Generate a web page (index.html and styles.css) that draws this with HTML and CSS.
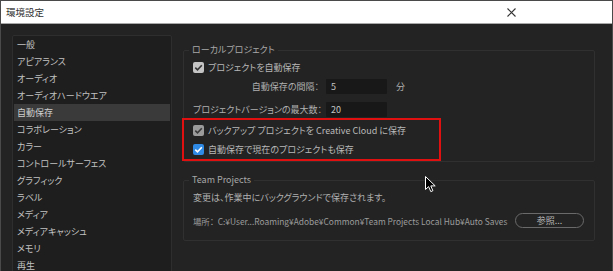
FILE: index.html
```html
<!DOCTYPE html>
<html lang="ja">
<head>
    <meta charset="UTF-8">
    <link rel="stylesheet" href="styles.css">
    <title>環境設定</title>
</head>
<body>
    <div class="window">
        <div class="titlebar">
            <span class="title">環境設定</span>
            <svg class="close" width="9" height="9" viewBox="0 0 9 9">
                <path d="M0.5 0.5 L8.5 8.5 M8.5 0.5 L0.5 8.5" stroke="#333" stroke-width="1.1" fill="none"/>
            </svg>
        </div>

        <div class="content">
            <ul class="side-list">
                <li>一般</li>
                <li>アピアランス</li>
                <li>オーディオ</li>
                <li>オーディオハードウエア</li>
                <li class="selected">自動保存</li>
                <li>コラボレーション</li>
                <li>カラー</li>
                <li>コントロールサーフェス</li>
                <li>グラフィック</li>
                <li>ラベル</li>
                <li>メディア</li>
                <li>メディアキャッシュ</li>
                <li>メモリ</li>
                <li>再生</li>
            </ul>

            <div class="panel">
                <fieldset class="group local">
                    <legend>ローカルプロジェクト</legend>
                    <div class="check-row first">
                        <span class="check light">
                            <svg width="11" height="11" viewBox="0 0 11 11"><path d="M2.3 5.6 L4.5 7.8 L8.8 3.2" stroke="#333" stroke-width="1.6" fill="none"/></svg>
                        </span>
                        プロジェクトを自動保存
                    </div>
                    <div class="field-row">
                        <span class="field-label">自動保存の間隔：</span>
                        <span class="input">5</span>
                        <span class="unit">分</span>
                    </div>
                    <div class="field-row second">
                        <span class="field-label">プロジェクトバージョンの最大数：</span>
                        <span class="input">20</span>
                    </div>
                    <div class="highlight">
                        <div class="check-row">
                            <span class="check gray">
                                <svg width="11" height="11" viewBox="0 0 11 11"><path d="M2.3 5.6 L4.5 7.8 L8.8 3.2" stroke="#3a3a3a" stroke-width="1.6" fill="none"/></svg>
                            </span>
                            バックアップ プロジェクトを Creative Cloud に保存
                        </div>
                        <div class="check-row">
                            <span class="check blue">
                                <svg width="11" height="11" viewBox="0 0 11 11"><path d="M2.3 5.6 L4.5 7.8 L8.8 3.2" stroke="#fff" stroke-width="1.6" fill="none"/></svg>
                            </span>
                            自動保存で現在のプロジェクトも保存
                        </div>
                    </div>
                </fieldset>

                <fieldset class="group team">
                    <legend>Team Projects</legend>
                    <div class="note">変更は、作業中にバックグラウンドで保存されます。</div>
                    <div class="location-row">
                        <span class="location">場所：&nbsp; C:¥User...Roaming¥Adobe¥Common¥Team Projects Local Hub¥Auto Saves</span>
                        <span class="browse">参照...</span>
                    </div>
                </fieldset>
            </div>
        </div>

        <svg class="cursor" width="12" height="18" viewBox="0 0 12 18">
            <path d="M0.5 0.5 L0.5 13.5 L3.6 10.6 L5.8 15.6 L7.9 14.7 L5.8 9.9 L10.2 9.9 Z" fill="#000" stroke="#fff" stroke-width="1"/>
        </svg>
    </div>
</body>
</html>
```

FILE: styles.css
```css
* {
    box-sizing: border-box;
}

body {
    margin: 0;
    background-color: #232323;
    font-family: "Noto Sans CJK JP", "Noto Sans", sans-serif;
    font-size: 9px;
    font-feature-settings: "palt";
}

.window {
    position: relative;
    width: 613px;
    height: 271px;
    overflow: hidden;
    background-color: #232323;
    border: 1px solid #4a4a4a;
    border-bottom: none;
}

.titlebar {
    display: flex;
    justify-content: space-between;
    align-items: center;
    height: 23px;
    padding: 0 96px 0 5px;
    background-color: #fff;
    border-bottom: 1px solid #a8a8a8;
}

.title {
    color: #333;
    font-size: 9.5px;
}

.close {
    display: block;
}

.content {
    display: flex;
    gap: 11px;
    padding: 11px 0 0 11px;
}

.side-list {
    list-style: none;
    margin: 0;
    padding: 0 1px;
    width: 160px;
    height: 260px;
    background-color: #1e1e1e;
    border: 1px solid #2e2e2e;
    border-radius: 2px;
}

.side-list li {
    height: 17px;
    line-height: 17px;
    padding-left: 3px;
    color: #c2c2c2;
}

.side-list li.selected {
    background-color: #3a3a3a;
    color: #d0d0d0;
}

.panel {
    display: flex;
    flex-direction: column;
    gap: 12px;
    width: 412px;
    padding-top: 9px;
}

.group {
    margin: 0;
    padding: 0 0 0 9px;
    border: 1px solid #303030;
    border-radius: 2px;
    min-width: 0;
}

.group legend {
    margin-left: -4px;
    padding: 0 3px;
    line-height: 12px;
    color: #a8a8a8;
}

.local {
    padding-bottom: 0;
}

.check-row {
    display: flex;
    align-items: center;
    gap: 4px;
    height: 19px;
    color: #b8b8b8;
}

.check-row.first {
    height: 22px;
}

.check {
    display: block;
    width: 11px;
    height: 11px;
    border-radius: 2px;
}

.check svg {
    display: block;
}

.check.light {
    background-color: #c4c4c4;
}

.check.gray {
    background-color: #9b9b9b;
}

.check.blue {
    background-color: #2f8ae6;
}

.field-row {
    display: flex;
    align-items: center;
    height: 15px;
    margin-top: 1px;
    color: #b0b0b0;
}

.field-row.second {
    margin-top: 8px;
}

.field-label {
    width: 133px;
    padding-right: 7px;
    text-align: right;
    white-space: nowrap;
}

.input {
    width: 61px;
    height: 15px;
    line-height: 15px;
    padding-left: 5px;
    background-color: #181818;
    border-radius: 1px;
    color: #c4c4c4;
}

.unit {
    margin-left: 9px;
}

.highlight {
    width: 259px;
    margin: 1px 0 0 -11px;
    padding: 1px 0 0 9px;
    height: 43px;
    border: 2px solid #e01010;
}

.team {
    padding-right: 10px;
    padding-bottom: 12px;
}

.note {
    height: 18px;
    line-height: 18px;
    margin-top: 3px;
    color: #b0b0b0;
}

.location-row {
    display: flex;
    align-items: center;
    justify-content: space-between;
    margin-top: 6px;
    height: 15px;
    color: #9c9c9c;
}

.location {
    font-size: 8.4px;
    white-space: nowrap;
}

.browse {
    width: 69px;
    height: 15px;
    line-height: 13px;
    text-align: center;
    border: 1px solid #6a6a6a;
    border-radius: 8px;
    color: #b8b8b8;
}

.cursor {
    position: absolute;
    left: 424px;
    top: 175px;
}
```
